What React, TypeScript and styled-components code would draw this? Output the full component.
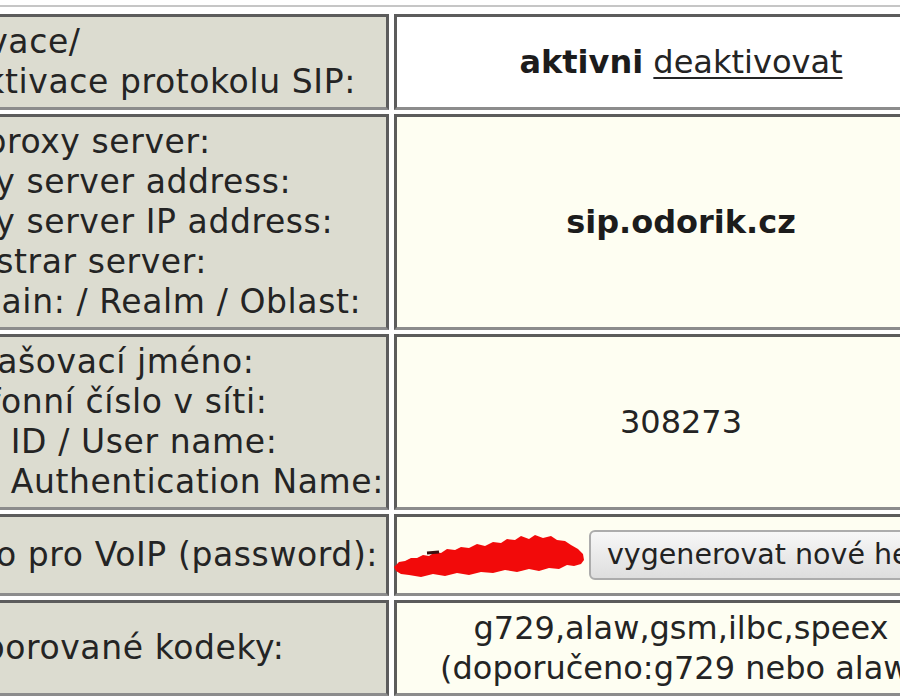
import React from "react";
import styled, { createGlobalStyle } from "styled-components";

const GlobalStyle = createGlobalStyle`
  html, body { margin: 0; padding: 0; background: #ffffff; }
  body {
    font-family: "DejaVu Sans", "Verdana", sans-serif;
    color: #242424;
    overflow: hidden;
  }
`;

const Viewport = styled.div`
  width: 900px;
  height: 700px;
  overflow: hidden;
`;

const SettingsTable = styled.table`
  table-layout: fixed;
  width: 1067px;
  margin: 5px 0 0 -94px;
  padding-top: 3px;
  border-collapse: separate;
  border-spacing: 5px 4px;
  border-top: 2px solid #c6c6c6;
  font-size: 32px;
  line-height: 40px;
`;

const LabelCell = styled.td`
  box-sizing: border-box;
  width: 478px;
  padding: 5px 2px 5px 8px;
  background: #dcdcd0;
  border: 3px solid #5c5c5c;
  border-bottom-color: #8c8c8c;
  font-size: 33px;
  letter-spacing: 0.6px;
  white-space: nowrap;
  text-align: left;
  vertical-align: middle;
`;

const ValueCell = styled.td<{ $tone: "white" | "cream" }>`
  box-sizing: border-box;
  width: 574px;
  padding: 5px 6px;
  background: ${(p) => (p.$tone === "white" ? "#ffffff" : "#fefef2")};
  border: 3px solid #5c5c5c;
  border-bottom-color: #8c8c8c;
  white-space: nowrap;
  text-align: center;
  vertical-align: middle;
`;

const Strong = styled.b`
  font-weight: bold;
  color: #1c1c1c;
`;

const Link = styled.a`
  color: #242424;
  text-decoration: underline;
  text-decoration-thickness: 2px;
  text-underline-offset: 4px;
  cursor: pointer;
`;

const PasswordLine = styled.div`
  display: flex;
  align-items: center;
  gap: 4px;
  margin: 8px 0;
`;

const Redaction = styled.svg`
  flex: none;
  margin-left: -10px;
  display: block;
`;

const Button = styled.button`
  flex: none;
  height: 50px;
  padding: 0 16px;
  font-family: "DejaVu Sans", "Verdana", sans-serif;
  font-size: 28.5px;
  line-height: 40px;
  color: #222222;
  background: linear-gradient(#f7f7f7, #dedede);
  border: 2px solid #acacac;
  border-radius: 6px;
  white-space: nowrap;
`;

const rows: { label: string[]; tone: "white" | "cream"; value: React.ReactNode }[] = [
  {
    label: ["Aktivace/", "deaktivace protokolu SIP:"],
    tone: "white",
    value: (
      <>
        <Strong>aktivni</Strong> <Link>deaktivovat</Link>
      </>
    ),
  },
  {
    label: [
      "SIP proxy server:",
      "Proxy server address:",
      "Proxy server IP address:",
      "Registrar server:",
      "Domain: / Realm / Oblast:",
    ],
    tone: "cream",
    value: <Strong>sip.odorik.cz</Strong>,
  },
  {
    label: [
      "Přihlašovací jméno:",
      "Telefonní číslo v síti:",
      "User ID / User name:",
      "User Authentication Name:",
    ],
    tone: "cream",
    value: "308273",
  },
  {
    label: ["Heslo pro VoIP (password):"],
    tone: "cream",
    value: (
      <PasswordLine>
        <Redaction width="192" height="48" viewBox="0 0 192 48" aria-label="skryté heslo">
          <path
            fill="#f20a0a"
            d="M1 36 L6 31 L12 30 L18 27 L24 27 L30 24 L36 25 L42 21 L48 22 L54 18 L62 19 L68 16 L76 17 L84 13 L92 15 L100 11 L108 12 L114 8 L122 9 L128 5 L136 8 L142 4 L150 7 L158 5 L164 9 L172 10 L178 14 L185 18 L190 23 L191 29 L188 33 L181 35 L174 34 L166 38 L156 37 L146 40 L136 38 L124 41 L112 39 L100 42 L88 41 L76 44 L64 42 L52 45 L40 43 L28 46 L16 44 L8 43 L3 40 Z"
          />
          <path d="M34 22 L46 21" stroke="#3a1010" strokeWidth="3" fill="none" />
        </Redaction>
        <Button type="button">vygenerovat nové heslo</Button>
      </PasswordLine>
    ),
  },
  {
    label: ["Podporované kodeky:"],
    tone: "cream",
    value: (
      <>
        g729,alaw,gsm,ilbc,speex
        <br />
        (doporučeno:g729 nebo alaw)
      </>
    ),
  },
];

export default function App() {
  return (
    <Viewport>
      <GlobalStyle />
      <SettingsTable>
        <tbody>
          {rows.map((row, i) => (
            <tr key={i}>
              <LabelCell>
                {row.label.map((line, j) => (
                  <React.Fragment key={j}>
                    {j > 0 && <br />}
                    {line}
                  </React.Fragment>
                ))}
              </LabelCell>
              <ValueCell $tone={row.tone}>{row.value}</ValueCell>
            </tr>
          ))}
        </tbody>
      </SettingsTable>
    </Viewport>
  );
}
